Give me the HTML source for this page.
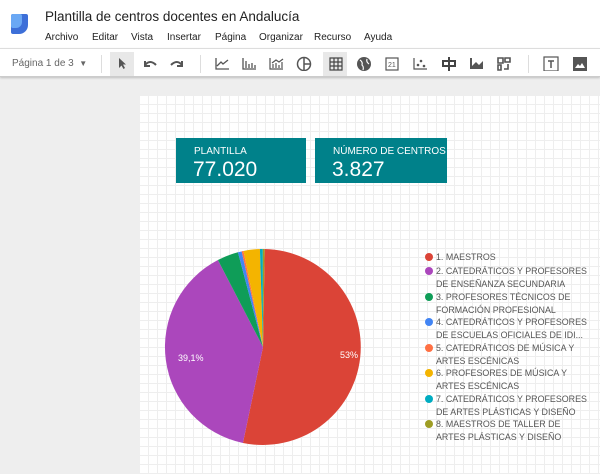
<!DOCTYPE html>
<html><head><meta charset="utf-8"><style>
*{margin:0;padding:0;box-sizing:border-box}
body{width:600px;height:474px;overflow:hidden;background:#eeeeee;font-family:"Liberation Sans",sans-serif;position:relative}
.top{position:absolute;left:0;top:0;width:600px;height:48px;background:#fff}
.title{position:absolute;left:45px;top:9px;font-size:13.5px;color:#222}
.menu{position:absolute;top:32px;font-size:10px;color:#222}
.tb{position:absolute;left:0;top:48px;width:600px;height:29px;background:#fff;border-top:1px solid #ddd;border-bottom:1px solid #ccc;box-shadow:0 1px 2px rgba(0,0,0,.2)}
.pg{position:absolute;left:12px;top:9px;font-size:10px;color:#666}
.sep{position:absolute;top:6px;width:1px;height:18px;background:#ddd}
.ic{position:absolute;top:6px}
.page{position:absolute;left:139px;top:95px;width:461px;height:379px;background-color:#fff;
background-image:linear-gradient(#eeeeee 1px,transparent 1px),linear-gradient(90deg,#eeeeee 1px,transparent 1px);background-size:9px 9px}
.card{position:absolute;top:138px;height:45px;background:#00818a;color:#fff}
.card .l{position:absolute;left:18px;top:8px;font-size:10px}
.card .v{position:absolute;left:17px;top:20px;font-size:21px}
.leg{position:absolute;left:436px;font-size:8.9px;color:#555;line-height:13px;white-space:nowrap}
.dot{position:absolute;left:-11px;top:2px;width:8px;height:8px;border-radius:50%}
</style></head><body>
<div class="top">
<div style="position:absolute;left:11px;top:14px;width:17px;height:20px;background:#3d6fd8;border-radius:2px 2px 9px 2px"></div>
<div style="position:absolute;left:11px;top:14px;width:11px;height:14px;background:#6aa8f4;border-radius:2px 2px 6px 2px"></div>
<div class="title">Plantilla de centros docentes en Andalucía</div>
<div class="menu" style="left:45px">Archivo</div><div class="menu" style="left:92px">Editar</div><div class="menu" style="left:131px">Vista</div><div class="menu" style="left:167px">Insertar</div><div class="menu" style="left:215px">Página</div><div class="menu" style="left:259px">Organizar</div><div class="menu" style="left:314px">Recurso</div><div class="menu" style="left:364px">Ayuda</div>
</div>
<div class="tb">
<div class="pg">Página 1 de 3 &nbsp;<span style="font-size:8px">▼</span></div>
<div class="sep" style="left:101px"></div>
<div style="position:absolute;left:110px;top:3px;width:24px;height:24px;background:#e8e8e8"></div>
<svg class="ic" style="left:115px" width="14" height="16"><path d="M4 3 L4 13 L6.5 10.5 L8.5 14 L10 13 L8 9.5 L11 9.5 Z" fill="#555"/></svg>
<svg class="ic" style="left:141px" width="18" height="16"><path d="M4 6 L4 11 L9 11 M4 10 Q9 4 15 10" stroke="#555" stroke-width="2" fill="none"/></svg>
<svg class="ic" style="left:168px" width="18" height="16"><path d="M14 6 L14 11 L9 11 M14 10 Q9 4 3 10" stroke="#555" stroke-width="2" fill="none"/></svg>
<div class="sep" style="left:200px"></div>
<svg class="ic" style="left:213px" width="18" height="16"><path d="M3 3 V14 H16 M4 11 L8 7 L10 9 L15 5" stroke="#555" stroke-width="1.3" fill="none"/></svg>
<svg class="ic" style="left:240px" width="18" height="16"><path d="M3 3 V14 H16 M6 6 V13 M9 9 V13 M12 8 V13 M15 10 V13" stroke="#555" stroke-width="1.3" fill="none"/></svg>
<svg class="ic" style="left:267px" width="18" height="16"><path d="M3 3 V14 H16 M6 9 V13 M9 8 V13 M12 10 V13 M15 7 V13 M5 8 L9 5 L12 7 L16 4" stroke="#555" stroke-width="1.2" fill="none"/></svg>
<svg class="ic" style="left:295px" width="18" height="16"><circle cx="9" cy="9" r="6.5" stroke="#555" stroke-width="1.5" fill="none"/><path d="M9 2.5 V15.5 M9 9 H15.5" stroke="#555" stroke-width="1.5"/></svg>
<div style="position:absolute;left:323px;top:3px;width:24px;height:24px;background:#e8e8e8"></div>
<svg class="ic" style="left:327px" width="18" height="16"><path d="M3 3 H15 V15 H3 Z M3 7 H15 M3 11 H15 M7 3 V15 M11 3 V15" stroke="#444" stroke-width="1.2" fill="none"/></svg>
<svg class="ic" style="left:355px" width="18" height="16"><circle cx="9" cy="9" r="7" fill="#555"/><path d="M5 5 Q8 7 7 10 Q9 12 8 15 M12 4 Q11 7 14 9" stroke="#fff" stroke-width="1.2" fill="none"/></svg>
<svg class="ic" style="left:383px" width="18" height="16"><rect x="3" y="3" width="12" height="12" stroke="#555" stroke-width="1.2" fill="none"/><text x="5" y="12" font-size="7" fill="#555" font-family="Liberation Sans">21</text></svg>
<svg class="ic" style="left:411px" width="18" height="16"><path d="M3 3 V14 H16" stroke="#555" stroke-width="1.2" fill="none"/><circle cx="7" cy="10" r="1.3" fill="#555"/><circle cx="10" cy="6" r="1.3" fill="#555"/><circle cx="13" cy="11" r="1.3" fill="#555"/></svg>
<svg class="ic" style="left:440px" width="18" height="16"><path d="M9 2 V16 M3 6 H15 V11 H3 Z" stroke="#444" stroke-width="2" fill="none"/></svg>
<svg class="ic" style="left:467px" width="18" height="16"><path d="M3 3 V14 H16 V6 L12 10 L9 7 L5 11 V3" fill="#555"/></svg>
<svg class="ic" style="left:495px" width="18" height="16"><path d="M3 3 H8 V8 H3 Z M10 3 H15 V7 H10 Z M3 10 H6 V15 H3 Z M13 9 V14 H9" stroke="#555" stroke-width="1.6" fill="none"/></svg>
<div class="sep" style="left:528px"></div>
<svg class="ic" style="left:542px" width="18" height="16"><rect x="2" y="2" width="14" height="14" stroke="#555" stroke-width="1.2" fill="none"/><path d="M6 6 H12 M9 6 V13" stroke="#555" stroke-width="1.5"/></svg>
<svg class="ic" style="left:571px" width="18" height="16"><rect x="2" y="2" width="14" height="14" fill="#555"/><path d="M4 13 L7 9 L9 11 L11 8 L14 13 Z" fill="#fff"/></svg>
</div>
<div class="page"></div>
<div class="card" style="left:176px;width:130px"><div class="l">PLANTILLA</div><div class="v">77.020</div></div>
<div class="card" style="left:315px;width:132px"><div class="l">NÚMERO DE CENTROS</div><div class="v">3.827</div></div>
<svg style="position:absolute;left:0;top:0" width="600" height="474">
<g transform="rotate(1 263 347)">
<path d="M263 347 L263 249 A98 98 0 1 1 244.6 443.3 Z" fill="#db4437"/>
<path d="M263 347 L244.6 443.3 A98 98 0 0 1 216.4 260.8 Z" fill="#ab47bc"/>
<path d="M263 347 L216.4 260.8 A98 98 0 0 1 236.3 252.7 Z" fill="#0f9d58"/>
<path d="M263 347 L236.3 252.7 A98 98 0 0 1 240 251.7 Z" fill="#4285f4"/>
<path d="M263 347 L240 251.7 A98 98 0 0 1 241.8 251.3 Z" fill="#ff7043"/>
<path d="M263 347 L241.8 251.3 A98 98 0 0 1 258.2 249.1 Z" fill="#f4b400"/>
<path d="M263 347 L258.2 249.1 A98 98 0 0 1 261.1 249 Z" fill="#00acc1"/>
<path d="M263 347 L261.1 249 A98 98 0 0 1 263 249 Z" fill="#9e9d24"/>
</g>
<text x="340" y="358" font-size="9" fill="#fff" font-family="Liberation Sans">53%</text>
<text x="178" y="361" font-size="9" fill="#fff" font-family="Liberation Sans">39,1%</text>
</svg>
<div class="leg" style="top:251px"><span class="dot" style="background:#db4437"></span>1. MAESTROS</div>
<div class="leg" style="top:265px"><span class="dot" style="background:#ab47bc"></span>2. CATEDRÁTICOS Y PROFESORES<br>DE ENSEÑANZA SECUNDARIA</div>
<div class="leg" style="top:291px"><span class="dot" style="background:#0f9d58"></span>3. PROFESORES TÉCNICOS DE<br>FORMACIÓN PROFESIONAL</div>
<div class="leg" style="top:316px"><span class="dot" style="background:#4285f4"></span>4. CATEDRÁTICOS Y PROFESORES<br>DE ESCUELAS OFICIALES DE IDI...</div>
<div class="leg" style="top:342px"><span class="dot" style="background:#ff7043"></span>5. CATEDRÁTICOS DE MÚSICA Y<br>ARTES ESCÉNICAS</div>
<div class="leg" style="top:367px"><span class="dot" style="background:#f4b400"></span>6. PROFESORES DE MÚSICA Y<br>ARTES ESCÉNICAS</div>
<div class="leg" style="top:393px"><span class="dot" style="background:#00acc1"></span>7. CATEDRÁTICOS Y PROFESORES<br>DE ARTES PLÁSTICAS Y DISEÑO</div>
<div class="leg" style="top:418px"><span class="dot" style="background:#9e9d24"></span>8. MAESTROS DE TALLER DE<br>ARTES PLÁSTICAS Y DISEÑO</div>
</body></html>
